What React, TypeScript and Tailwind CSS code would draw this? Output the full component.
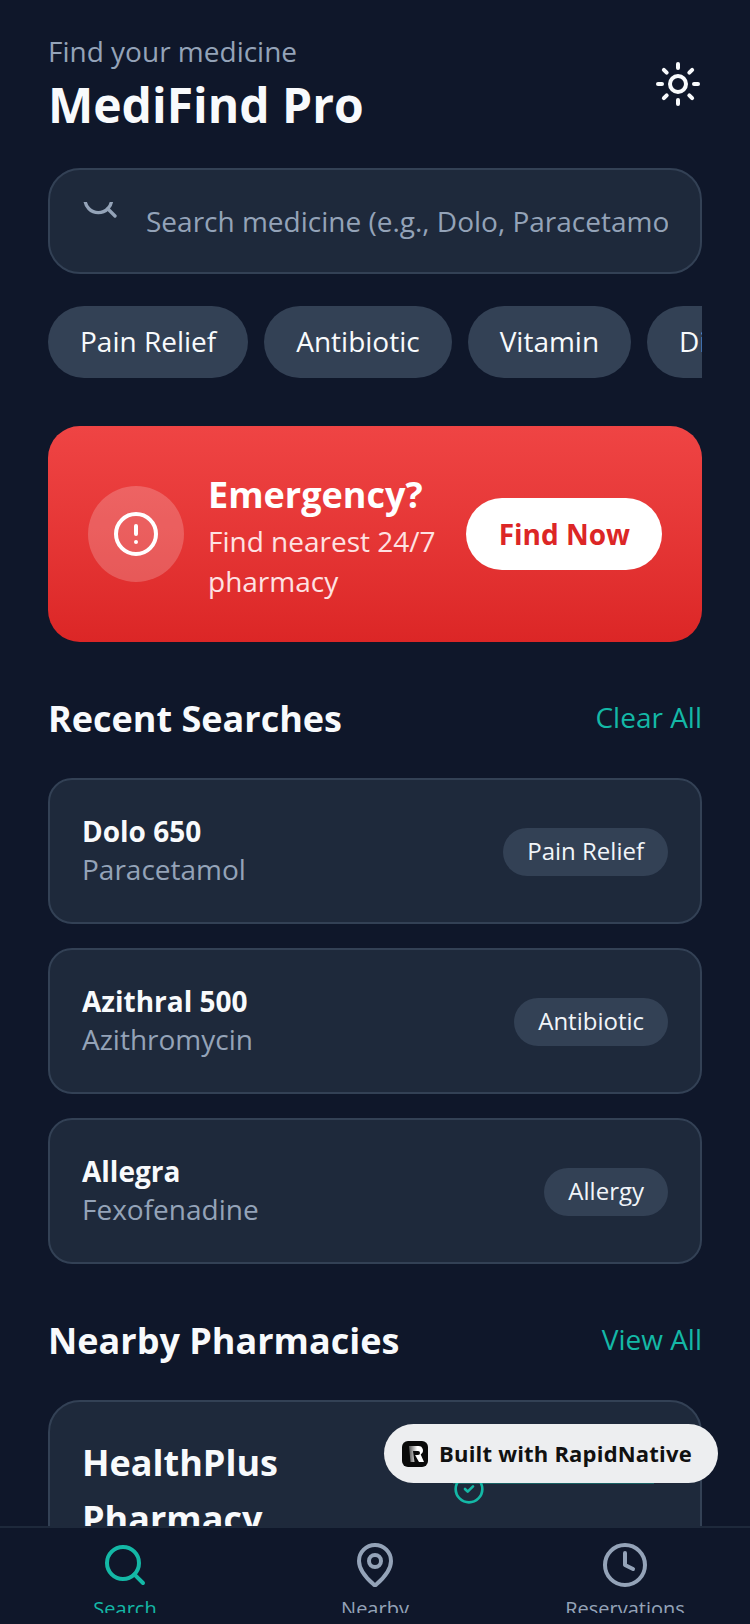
import React from "react";
import { Search, Sun, CircleAlert, MapPin, Clock, CircleCheck } from "lucide-react";

function Recent({ name, sub, tag }: { name: string; sub: string; tag: string }) {
  return (
    <div className="flex items-center justify-between h-[146px] px-[32px] rounded-[24px] border-2 border-[#334155] bg-[#1e293b]">
      <div className="flex flex-col pb-[2px]">
        <span className="text-[28px] leading-[38px] font-bold text-[#f8fafc]">{name}</span>
        <span className="text-[28px] leading-[38px] text-[#94a3b8]">{sub}</span>
      </div>
      <span className="mt-[2px] h-[48px] px-[24px] pb-[2px] flex items-center rounded-full bg-[#334155] text-[24px] text-[#f1f5f9]">{tag}</span>
    </div>
  );
}

function Chip({ label }: { label: string }) {
  return (
    <span className="shrink-0 h-[72px] px-[32px] pb-[2px] flex items-center rounded-full bg-[#334155] text-[28px] text-[#f8fafc]">{label}</span>
  );
}

function Tab({ icon, label, active }: { icon: React.ReactNode; label: string; active?: boolean }) {
  return (
    <div className="flex-1 flex flex-col items-center pt-[13px] h-[85px] overflow-hidden">
      <div className="shrink-0 w-[48px] h-[48px]">{icon}</div>
      <span className={`shrink-0 text-[20px] leading-[28px] mt-[6px] whitespace-nowrap ${active ? "text-[#14b8a6]" : "text-[#94a3b8]"}`}>{label}</span>
    </div>
  );
}

function SectionHead({ title, action }: { title: string; action: string }) {
  return (
    <div className="mt-[48px] flex items-center justify-between h-[56px]">
      <span className="pt-[2px] text-[36px] font-bold text-[#f8fafc]">{title}</span>
      <span className="pb-[2px] text-[28px] text-[#14b8a6]">{action}</span>
    </div>
  );
}

export default function App() {
  return (
    <div className="relative w-[750px] h-[1624px] overflow-hidden flex flex-col bg-[#0f172a] font-['Open_Sans',sans-serif]">
      <div className="flex-1 min-h-0 overflow-hidden px-[48px] pt-[31px]">
        <div className="flex items-center justify-between">
          <div className="flex flex-col">
            <span className="text-[28px] leading-[40px] text-[#94a3b8]">Find your medicine</span>
            <span className="mt-[2px] text-[48px] leading-[64px] font-bold text-[#f8fafc]">MediFind Pro</span>
          </div>
          <Sun size={48} color="#f8fafc" strokeWidth={2} />
        </div>

        <div className="mt-[31px] h-[106px] flex rounded-[32px] border-2 border-[#334155] bg-[#1e293b] pl-[30px] pr-[32px]">
          <div className="w-[66px] shrink-0 h-[16px] mt-[32px] overflow-hidden">
            <Search size={40} color="#94a3b8" className="-mt-[21px]" />
          </div>
          <div className="flex-1 min-w-0 overflow-hidden flex items-center">
            <span className="whitespace-nowrap text-[28px] text-[#94a3b8]">Search medicine (e.g., Dolo, Paracetamol)</span>
          </div>
        </div>

        <div className="mt-[32px] flex gap-[16px] overflow-hidden">
          <Chip label="Pain Relief" />
          <Chip label="Antibiotic" />
          <Chip label="Vitamin" />
          <Chip label="Diabetes" />
        </div>

        <div className="mt-[48px] h-[216px] flex items-center rounded-[32px] bg-gradient-to-b from-[#ef4444] to-[#dc2626] px-[40px]">
          <div className="w-[96px] h-[96px] shrink-0 rounded-full bg-white/20 flex items-center justify-center">
            <CircleAlert size={48} color="#fff" />
          </div>
          <div className="flex-1 min-w-0 ml-[24px] pt-[4px] flex flex-col">
            <span className="mb-[2px] text-[36px] leading-[48px] font-bold text-white">Emergency?</span>
            <span className="text-[28px] leading-[40px] text-[#fee2e2]">Find nearest 24/7 pharmacy</span>
          </div>
          <span className="shrink-0 h-[72px] pl-[33px] pr-[32px] flex items-center rounded-full bg-white text-[28px] font-bold text-[#dc2626]">Find Now</span>
        </div>

        <SectionHead title="Recent Searches" action="Clear All" />

        <div className="mt-[32px] flex flex-col gap-[24px]">
          <Recent name="Dolo 650" sub="Paracetamol" tag="Pain Relief" />
          <Recent name="Azithral 500" sub="Azithromycin" tag="Antibiotic" />
          <Recent name="Allegra" sub="Fexofenadine" tag="Allergy" />
        </div>

        <SectionHead title="Nearby Pharmacies" action="View All" />

        <div className="mt-[32px] h-[300px] rounded-[32px] border-2 border-[#334155] bg-[#1e293b] pl-[32px] pt-[33px] flex">
          <div className="w-[371px] shrink-0 text-[36px] leading-[56px] font-bold text-[#f8fafc] pr-[90px]">HealthPlus Pharmacy</div>
          <div className="mt-[38px] w-[201px] h-[11px] bg-[#14b8a6]/40">
            <CircleCheck size={32} color="#14b8a6" />
          </div>
        </div>
      </div>

      <div className="h-[98px] shrink-0 flex border-t-2 border-[#1e293b] bg-[#0f172a]">
        <Tab icon={<Search size={48} color="#14b8a6" />} label="Search" active />
        <Tab icon={<MapPin size={48} color="#94a3b8" />} label="Nearby" />
        <Tab icon={<Clock size={48} color="#94a3b8" />} label="Reservations" />
      </div>

      <div className="absolute left-[384px] top-[1424px] w-[334px] h-[59px] rounded-full bg-[#edeef0] flex items-center pl-[18px]">
        <svg width="26" height="26" viewBox="0 0 26 26" className="shrink-0">
          <defs>
            <linearGradient id="r" x1="0" x2="1" y1="0" y2="0">
              <stop offset="0" stopColor="#555" />
              <stop offset="0.55" stopColor="#fff" />
            </linearGradient>
          </defs>
          <rect width="26" height="26" rx="6" fill="#0a0a0a" />
          <path d="M7 5h9.500a4.500 4.500 0 0 1 2.200 8.400L22 21h-5l-4-7h3a1.700 1.700 0 0 0 0-4H11l1.500 11H8.500z" fill="url(#r)" />
        </svg>
        <span className="ml-[11px] text-[22px] font-bold tracking-[0.2px] text-[#111] whitespace-nowrap">Built with RapidNative</span>
      </div>
    </div>
  );
}
